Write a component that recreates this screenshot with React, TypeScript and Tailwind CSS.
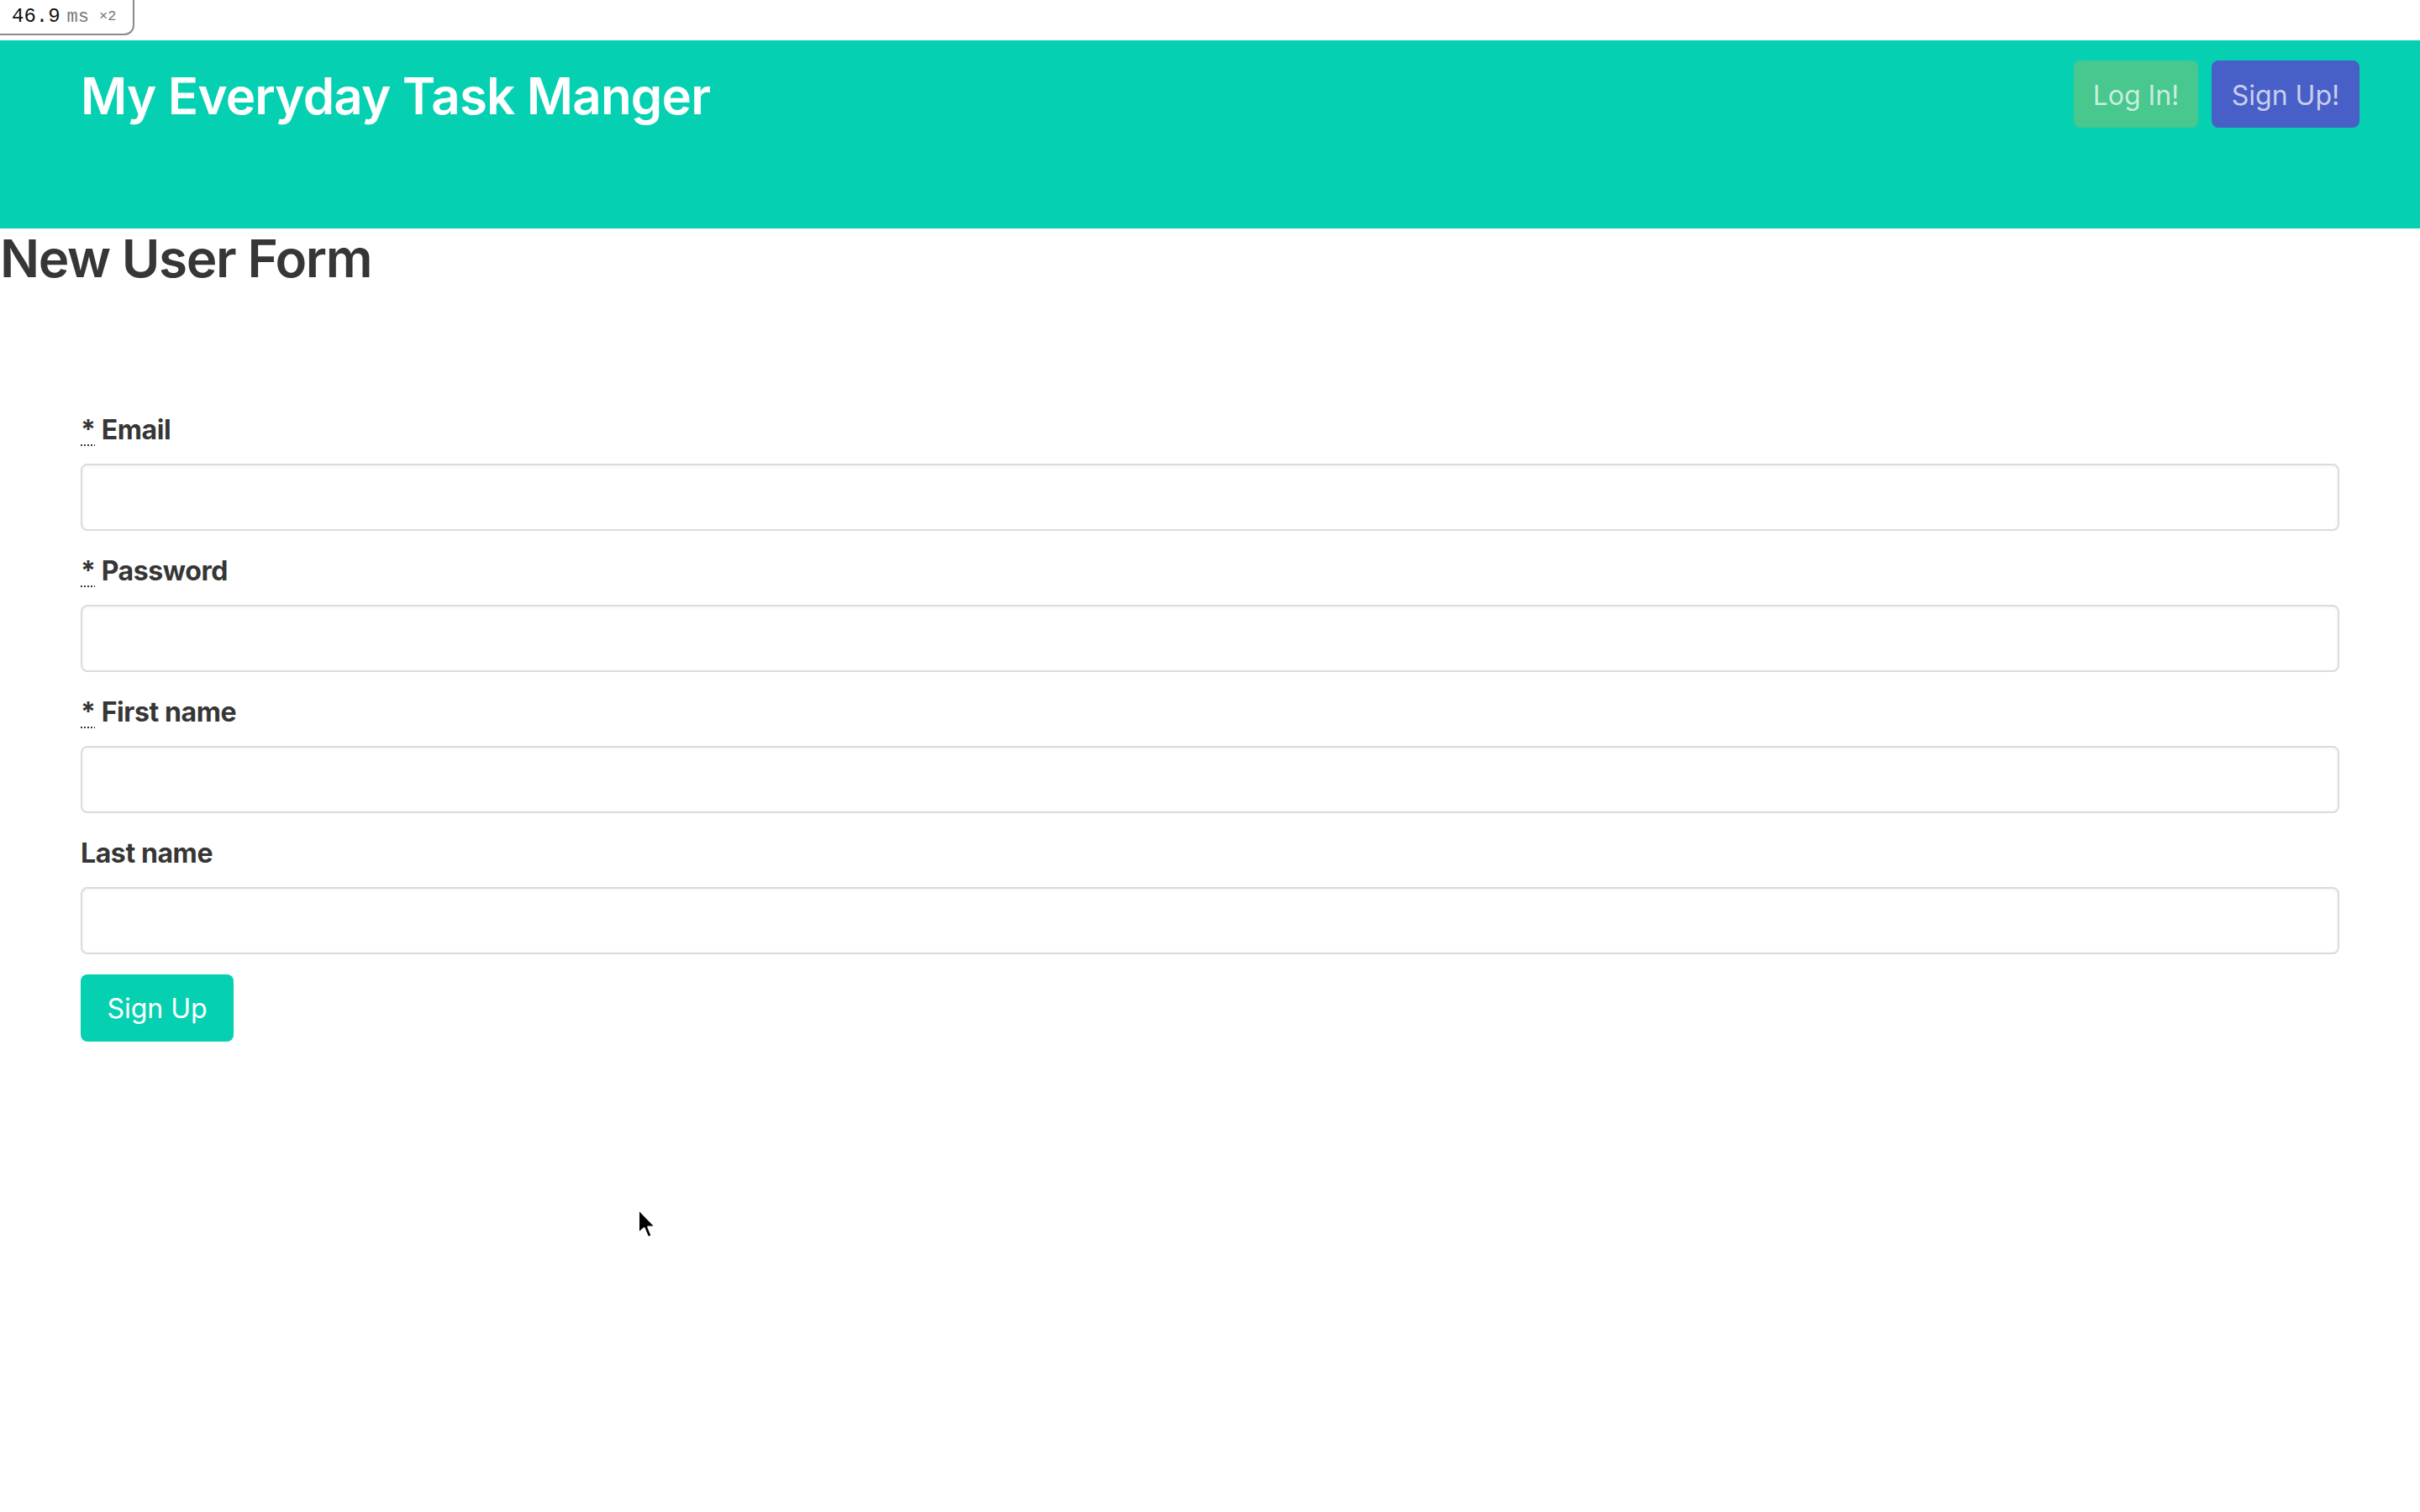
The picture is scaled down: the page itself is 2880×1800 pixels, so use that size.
import React from "react";

const fields = [
  { label: "Email", required: true, type: "email" },
  { label: "Password", required: true, type: "password" },
  { label: "First name", required: true, type: "text" },
  { label: "Last name", required: false, type: "text" },
];

function TimingBadge() {
  return (
    <div className="h-[48px]">
      <div className="flex h-[42px] w-[160px] items-center gap-[8px] rounded-br-[12px] border-r-2 border-b-2 border-[#8a8a8a] bg-white pl-[14px] font-['Liberation_Mono',monospace]">
        <span className="text-[24px] text-[#111]">46.9</span>
        <span className="text-[22px] text-[#777]">ms</span>
        <span className="ml-[4px] text-[17px] text-[#777]">×2</span>
      </div>
    </div>
  );
}

function Cursor() {
  return (
    <svg
      className="absolute left-[758px] top-[1438px]"
      width="26"
      height="38"
      viewBox="0 0 13 19"
    >
      <path
        d="M1 1 L1 15 L4.3 12 L6.6 17.5 L8.8 16.6 L6.6 11.3 L11 11.3 Z"
        fill="#000"
        stroke="#fff"
        strokeWidth="1"
        strokeLinejoin="round"
      />
    </svg>
  );
}

export default function App() {
  return (
    <div className="relative min-h-screen bg-white font-['Inter','Liberation_Sans',sans-serif]">
      <TimingBadge />

      <header className="flex h-[224px] items-start justify-between bg-[#05d1b2] pl-[96px] pr-[72px]">
        <h1 className="mt-[30px] text-[60px] font-semibold leading-[72px] tracking-[-0.8px] text-white">
          My Everyday Task Manger
        </h1>
        <div className="mt-[24px] flex gap-[16px]">
          <button className="h-[80px] w-[148px] rounded-[8px] bg-[#48c78e] pt-[4px] text-[32px] text-[#c8eedd]">
            Log In!
          </button>
          <button className="h-[80px] w-[176px] rounded-[8px] bg-[#485fc7] pt-[4px] text-[32px] text-[#c8cfee]">
            Sign Up!
          </button>
        </div>
      </header>

      <h2 className="text-[62px] font-semibold leading-[72px] tracking-[-1.4px] text-[#363636]">
        New User Form
      </h2>

      <form className="px-[96px] pt-[144px]">
        {fields.map((f) => (
          <div key={f.label} className="mb-[24px]">
            <label className="mb-[16px] block text-[32px] font-bold leading-[48px] tracking-[-0.4px] text-[#363636]">
              {f.required && (
                <>
                  <abbr title="required" className="no-underline">
                    <span className="underline decoration-dotted decoration-2 underline-offset-[6px]">*</span>
                  </abbr>{" "}
                </>
              )}
              {f.label}
            </label>
            <input
              type={f.type}
              className="block h-[80px] w-full rounded-[8px] border-2 border-[#dbdbdb] bg-white px-[22px] text-[32px] shadow-[inset_0_1px_4px_rgba(10,10,10,0.05)] outline-none"
            />
          </div>
        ))}
        <button
          type="button"
          className="h-[80px] w-[182px] rounded-[8px] bg-[#05d1b2] pt-[2px] text-[32px] text-white"
        >
          Sign Up
        </button>
      </form>

      <Cursor />
    </div>
  );
}
